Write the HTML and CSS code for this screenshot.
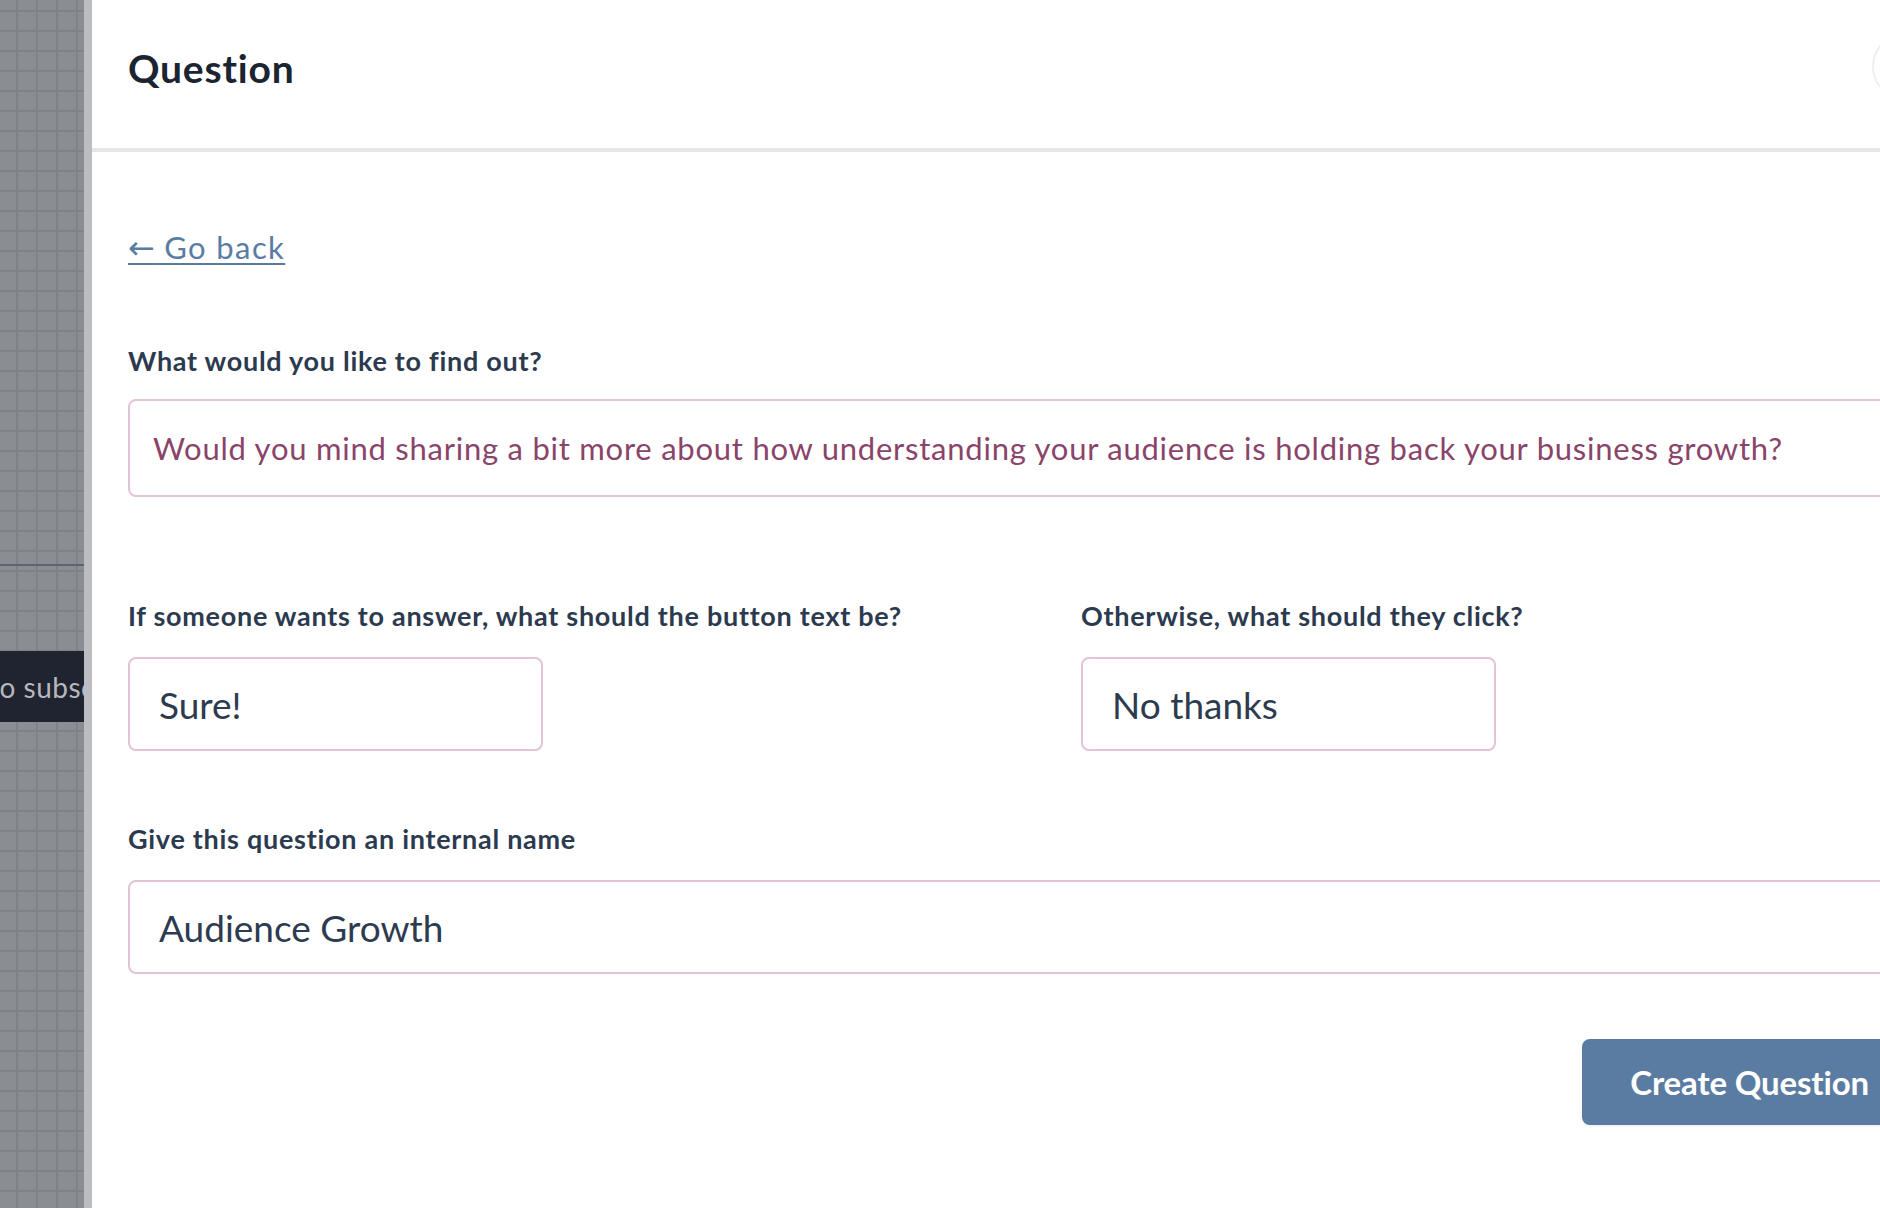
FILE: index.html
```html
<!DOCTYPE html>
<html lang="en">
<head>
<meta charset="utf-8">
<title>Question</title>
<link rel="stylesheet" href="styles.css">
</head>
<body>
<aside class="backdrop">
  <div class="backdrop-rule"></div>
  <div class="backdrop-bar"><span class="backdrop-text">to subscribe</span></div>
</aside>
<div class="edge"></div>
<main class="panel">
  <header class="panel-header">
    <h1 class="panel-title">Question</h1>
    <button class="close-btn" aria-label="Close"></button>
  </header>
  <section class="panel-body">
    <a class="back-link" href="#"><span class="back-arrow">←</span> Go back</a>
    <form class="form">
      <label class="field-label first">What would you like to find out?</label>
      <input class="field question-input" type="text" value="Would you mind sharing a bit more about how understanding your audience is holding back your business growth?">
      <div class="row">
        <div class="col">
          <label class="field-label">If someone wants to answer, what should the button text be?</label>
          <input class="field small-input" type="text" value="Sure!">
        </div>
        <div class="col">
          <label class="field-label">Otherwise, what should they click?</label>
          <input class="field small-input" type="text" value="No thanks">
        </div>
      </div>
      <label class="field-label third">Give this question an internal name</label>
      <input class="field name-input" type="text" value="Audience Growth">
      <div class="actions">
        <button class="create-btn" type="button">Create Question</button>
      </div>
    </form>
  </section>
</main>
</body>
</html>
```
FILE: styles.css
```css
* { box-sizing: border-box; }
html, body { margin: 0; padding: 0; }
body {
  display: flex;
  width: 1880px;
  height: 1208px;
  overflow: hidden;
  font-family: "Lato", "DejaVu Sans", sans-serif;
  background: #ffffff;
}
.backdrop {
  width: 84px;
  flex: 0 0 84px;
  background-color: #8a8e92;
  background-image:
    linear-gradient(to right, #7f8286 2px, transparent 2px),
    linear-gradient(to bottom, #7f8286 2px, transparent 2px);
  background-size: 20px 20px;
  background-position: 16px 10px;
  overflow: hidden;
}
.backdrop-rule {
  margin-top: 564px;
  height: 2px;
  background: #5d6470;
}
.backdrop-bar {
  margin-top: 85px;
  height: 71px;
  background: #1f2430;
  display: flex;
  align-items: center;
  white-space: nowrap;
  overflow: hidden;
}
.backdrop-text {
  color: #b6b8bc;
  font-size: 28px;
  letter-spacing: 0.5px;
  margin-left: -11px;
}
.edge {
  width: 8px;
  flex: 0 0 8px;
  background: #bcbdc3;
}
.panel {
  flex: 1;
  position: relative;
  overflow: hidden;
  background: #ffffff;
}
.panel-header {
  height: 152px;
  border-bottom: 4px solid #e6e6e6;
  padding: 49px 0 0 36px;
}
.panel-title {
  margin: 0;
  font-size: 39px;
  line-height: 1;
  font-weight: 700;
  letter-spacing: 0.8px;
  color: #1b2431;
}
.close-btn {
  position: absolute;
  left: 1780px;
  top: 33px;
  width: 67px;
  height: 67px;
  border-radius: 50%;
  border: 2px solid #efefef;
  background: #ffffff;
  padding: 0;
}
.panel-body {
  padding: 77px 0 0 36px;
}
.back-link {
  display: inline-block;
  font-size: 31px;
  line-height: 36px;
  letter-spacing: 1.4px;
  color: #5a7ca3;
  text-decoration: underline;
  text-decoration-thickness: 2px;
  text-underline-offset: 4px;
}
.back-arrow {
  font-family: "DejaVu Sans", sans-serif;
  font-size: 32px;
  letter-spacing: 0;
}
.form {
  width: 1789px;
  display: flex;
  flex-direction: column;
}
.field-label {
  display: block;
  font-size: 27px;
  line-height: 32px;
  font-weight: 700;
  letter-spacing: 0.72px;
  color: #2c3a4f;
  margin-top: 72px;
  margin-bottom: 25px;
}
.field-label.first { margin-top: 79px; margin-bottom: 22px; }
.row .field-label { margin-top: 103px; margin-bottom: 25px; }
.field {
  display: block;
  border: 2px solid #e1c4d7;
  border-radius: 8px;
  background: #ffffff;
  font-family: "Lato", "DejaVu Sans", sans-serif;
  outline: none;
  margin: 0;
}
.question-input {
  width: 100%;
  height: 98px;
  padding: 0 23px;
  font-size: 31px;
  letter-spacing: 0.76px;
  color: #8a4469;
}
.row {
  display: grid;
  grid-template-columns: 953px 1fr;
}
.col { display: flex; flex-direction: column; }
.small-input {
  width: 415px;
  height: 94px;
  padding: 0 29px;
  font-size: 37px;
  color: #2d3b50;
}
.name-input {
  width: 100%;
  height: 94px;
  padding: 0 29px;
  font-size: 37px;
  color: #2d3b50;
}
.actions {
  display: flex;
  justify-content: flex-end;
  margin-top: 65px;
}
.create-btn {
  height: 86px;
  padding: 0 48px;
  border: none;
  border-radius: 8px;
  background: #5b7ca2;
  color: #ffffff;
  font-family: "Lato", "DejaVu Sans", sans-serif;
  font-size: 33px;
  font-weight: 700;
  letter-spacing: -0.15px;
  box-shadow: 0 1px 3px rgba(0,0,0,0.08);
}
```
